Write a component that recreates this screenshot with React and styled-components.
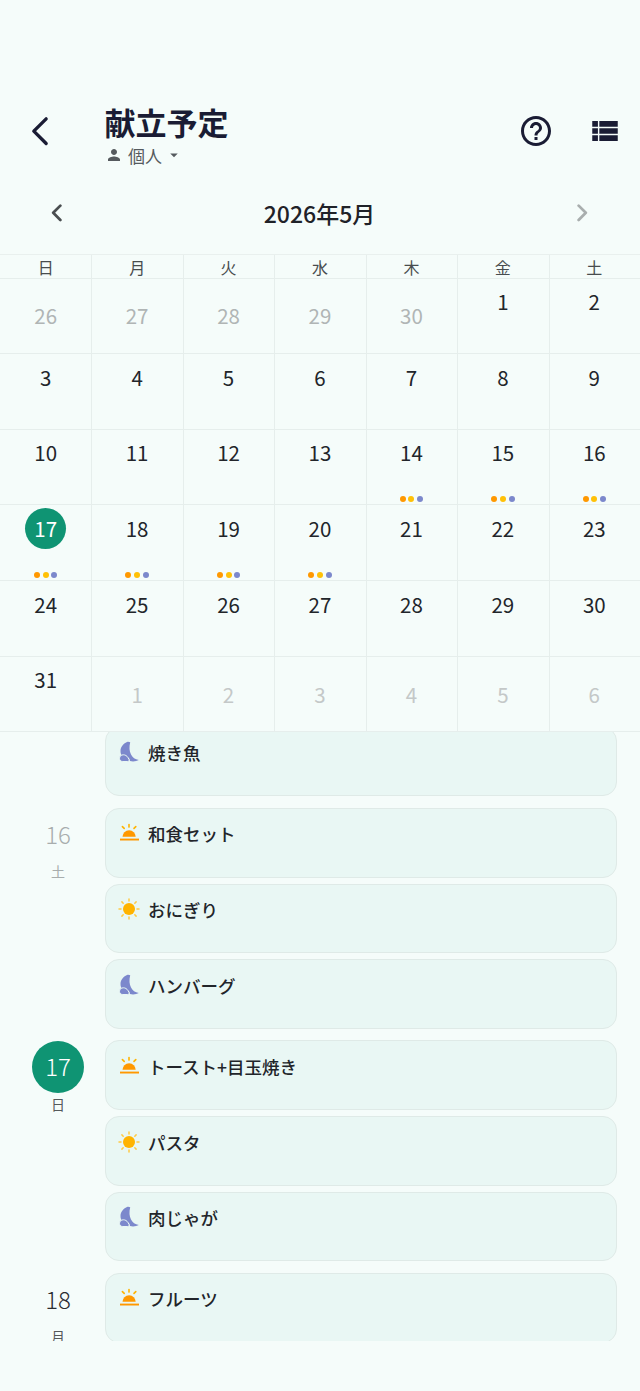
import React from 'react';
import styled, { createGlobalStyle } from 'styled-components';
import { MdHelpOutline, MdViewList, MdPerson, MdArrowDropDown } from 'react-icons/md';

const GlobalStyle = createGlobalStyle`
  html, body { margin: 0; padding: 0; background: #f5fcfa; }
  body { font-family: "Noto Sans CJK JP", "Noto Sans", sans-serif; color: #1a1c2e; }
`;

const Screen = styled.div`
  width: 640px;
  height: 1391px;
  overflow: hidden;
  padding-top: 100px;
  box-sizing: border-box;
  background: #f5fcfa;
`;

const Header = styled.header`
  display: flex;
  align-items: flex-start;
  height: 68px;
`;

const BackButton = styled.div`
  width: 105px;
  padding: 15.6px 0 0 29.6px;
  box-sizing: border-box;
  flex: none;
`;

const TitleBlock = styled.div`
  flex: 1;
`;

const Title = styled.h1`
  margin: 0 0 0 -0.5px;
  font-size: 31px;
  line-height: 43px;
  font-weight: 700;
  color: #1a1c34;
`;

const Owner = styled.div`
  display: flex;
  align-items: center;
  height: 24px;
  color: #555a5e;
  font-size: 17px;
  svg { flex: none; }
`;

const OwnerName = styled.span`
  margin: 0 3px 0 5px;
`;

const HeaderIcons = styled.div`
  display: flex;
  align-items: center;
  gap: 34.5px;
  padding: 13px 18px 0 0;
  color: #1a1c34;
`;

const MonthBar = styled.div`
  display: flex;
  align-items: center;
  justify-content: space-between;
  height: 60px;
  margin: 15px 0 11px;
  padding: 0 52px 0 51px;
`;

const MonthTitle = styled.div`
  font-size: 23px;
  font-weight: 500;
  color: #1f2228;
  margin-top: -1px;
`;

const Calendar = styled.div`
  display: grid;
  grid-template-columns: repeat(7, 1fr);
  grid-template-rows: 23.5px repeat(6, 75.67px);
  border-top: 1px solid #e9f0ee;
  box-sizing: border-box;
`;

const WeekCell = styled.div`
  display: flex;
  align-items: center;
  justify-content: center;
  padding-top: 0.5px;
  font-size: 16px;
  color: #484c4e;
  box-shadow: inset 1px 0 0 #e6eeec;
  border-bottom: 1px solid #e6eeec;
  &:nth-child(7n + 1) { box-shadow: none; }
`;

const DayCell = styled.div`
  position: relative;
  display: flex;
  justify-content: center;
  align-items: ${p => (p.$muted ? 'center' : 'flex-start')};
  padding-top: ${p => (p.$muted ? '0' : '2.5px')};
  box-sizing: border-box;
  box-shadow: inset 1px 0 0 #e6eeec;
  border-bottom: 1px solid #e6eeec;
  &:nth-child(7n + 1) { box-shadow: none; }
`;

const DayNumber = styled.div`
  width: 41px;
  height: 41px;
  line-height: 41px;
  border-radius: 50%;
  text-align: center;
  font-size: 20.5px;
  font-weight: 400;
  color: ${p => (p.$today ? '#fff' : p.$muted ? p.$faint ? '#c4c8c8' : '#b0b5b5' : '#22252a')};
  background: ${p => (p.$today ? '#0f9473' : 'transparent')};
`;

const Dots = styled.div`
  position: absolute;
  left: 0;
  right: 0;
  bottom: 2px;
  display: flex;
  justify-content: center;
  gap: 2.7px;
`;

const Dot = styled.span`
  width: 6px;
  height: 6px;
  border-radius: 50%;
  background: ${p => p.$color};
`;

const Agenda = styled.div`
  height: 608.5px;
  overflow: hidden;
`;

const AgendaScroll = styled.div`
  margin-top: -5.7px;
`;

const DayGroup = styled.div`
  display: flex;
  margin-bottom: 11.5px;
  padding-right: 23px;
`;

const DayAside = styled.div`
  width: 105px;
  flex: none;
  display: flex;
  flex-direction: column;
  align-items: center;
  padding: 1px 0 0 11px;
  box-sizing: border-box;
`;

const AsideNumber = styled.div`
  width: 52px;
  height: 52px;
  line-height: 50px;
  border-radius: 50%;
  text-align: center;
  font-size: 24px;
  font-weight: 300;
  color: ${p => (p.$today ? '#fff' : p.$past ? '#a8adad' : '#2a2d32')};
  background: ${p => (p.$today ? '#0f9473' : 'transparent')};
`;

const AsideWeek = styled.div`
  font-size: 14px;
  line-height: 22px;
  margin-top: -0.5px;
  color: ${p => (p.$past ? '#a8adad' : '#55595b')};
`;

const MealList = styled.div`
  flex: 1;
  display: flex;
  flex-direction: column;
  gap: 6px;
`;

const MealCard = styled.div`
  display: flex;
  align-items: flex-start;
  gap: 8px;
  height: 69.67px;
  box-sizing: border-box;
  padding: 13.5px 12px 0 12px;
  background: #e9f7f4;
  border: 1px solid #dfeae7;
  border-radius: 14px;
`;

const MealName = styled.span`
  font-size: 17.5px;
  line-height: 24px;
  font-weight: 500;
  color: #22252a;
`;

const Chevron = ({ left, size, color, width }) => (
  <svg width={size} height={size * 1.6} viewBox="0 0 10 16" fill="none">
    <path
      d={left ? 'M8.5 1.5 2 8l6.5 6.5' : 'M1.5 1.5 8 8l-6.5 6.5'}
      stroke={color}
      strokeWidth={width}
      strokeLinecap="round"
      strokeLinejoin="round"
    />
  </svg>
);

const SunriseIcon = () => (
  <svg width="22" height="22" viewBox="0 0 22 22">
    <path d="M4.5 14.8a6.6 6.6 0 0 1 13.2 0z" fill="#ff9800" />
    <rect x="2" y="16.6" width="19" height="1.9" fill="#ff9800" />
    <path d="M11 2.5v2.6M4.4 4.6l1.8 1.8M17.8 4.6 16 6.4" stroke="#ffb300" strokeWidth="1.6" strokeLinecap="round" />
  </svg>
);

const SunIcon = () => (
  <svg width="22" height="22" viewBox="0 0 22 22">
    <circle cx="11" cy="11" r="6" fill="#ffb300" />
    <path
      d="M11 1v2M11 19v2M1 11h2M19 11h2M3.9 3.9l1.3 1.3M16.8 16.8l1.3 1.3M3.9 18.1l1.3-1.3M16.8 5.2l1.3-1.3"
      stroke="#ffca45"
      strokeWidth="1.5"
      strokeLinecap="round"
    />
  </svg>
);

const MoonIcon = () => (
  <svg width="22" height="22" viewBox="0 0 22 22">
    <path
      d="M9.5.8C5.5 2.5 2.5 6 2.5 10c0 2 .6 3.6 1.5 5l7 2 1 3c3 .8 6.500.3 8.800-1-3.800-.5-6.300-2.500-7.800-5.500C11.300 10 11 6 12.200 1.200 11.400.8 10.300.6 9.500.8z"
      fill="#7c88cc"
    />
    <path
      d="M1.500 17.300c0-2 1.700-3.500 3.800-3.500 2 0 3.500 1 4.500 2.500l1.200 2c.5.900-.2 2.200-1.400 2.200H4.800c-1.900 0-3.300-1.300-3.300-3.200z"
      fill="#7c88cc"
      stroke="#e9f7f4"
      strokeWidth="1"
    />
  </svg>
);

const mealIcons = { morning: SunriseIcon, noon: SunIcon, night: MoonIcon };

const weekDays = ['日', '月', '火', '水', '木', '金', '土'];

const cells = [
  ...[26, 27, 28, 29, 30].map(n => ({ n, muted: true })),
  ...Array.from({ length: 31 }, (_, i) => ({ n: i + 1 })),
  ...[1, 2, 3, 4, 5, 6].map(n => ({ n, muted: true, faint: true })),
];

const dotted = [14, 15, 16, 17, 18, 19, 20];

const agenda = [
  { key: 15, hidden: true, meals: [['night', '焼き魚']] },
  { key: 16, past: true, week: '土', meals: [['morning', '和食セット'], ['noon', 'おにぎり'], ['night', 'ハンバーグ']] },
  { key: 17, today: true, week: '日', meals: [['morning', 'トースト+目玉焼き'], ['noon', 'パスタ'], ['night', '肉じゃが']] },
  { key: 18, week: '月', meals: [['morning', 'フルーツ']] },
];

export default function App() {
  return (
    <Screen>
      <GlobalStyle />
      <Header>
        <BackButton>
          <Chevron left size={19} color="#1a1c34" width={1.75} />
        </BackButton>
        <TitleBlock>
          <Title>献立予定</Title>
          <Owner>
            <MdPerson size={18} />
            <OwnerName>個人</OwnerName>
            <MdArrowDropDown size={18} />
          </Owner>
        </TitleBlock>
        <HeaderIcons>
          <MdHelpOutline size={36} />
          <MdViewList size={34} />
        </HeaderIcons>
      </Header>
      <MonthBar>
        <Chevron left size={11} color="#4a4e50" width={2.5} />
        <MonthTitle>2026年5月</MonthTitle>
        <Chevron size={11} color="#a9aeae" width={2.5} />
      </MonthBar>
      <Calendar>
        {weekDays.map(d => <WeekCell key={d}>{d}</WeekCell>)}
        {cells.map((c, i) => (
          <DayCell key={i} $muted={c.muted}>
            <DayNumber $muted={c.muted} $faint={c.faint} $today={!c.muted && c.n === 17}>{c.n}</DayNumber>
            {!c.muted && dotted.includes(c.n) && (
              <Dots>
                <Dot $color="#ff9800" />
                <Dot $color="#ffc107" />
                <Dot $color="#7c88cc" />
              </Dots>
            )}
          </DayCell>
        ))}
      </Calendar>
      <Agenda>
        <AgendaScroll>
          {agenda.map(day => (
            <DayGroup key={day.key}>
              <DayAside>
                {!day.hidden && (
                  <>
                    <AsideNumber $today={day.today} $past={day.past}>{day.key}</AsideNumber>
                    <AsideWeek $past={day.past}>{day.week}</AsideWeek>
                  </>
                )}
              </DayAside>
              <MealList>
                {day.meals.map(([type, name]) => {
                  const Icon = mealIcons[type];
                  return (
                    <MealCard key={name}>
                      <Icon />
                      <MealName>{name}</MealName>
                    </MealCard>
                  );
                })}
              </MealList>
            </DayGroup>
          ))}
        </AgendaScroll>
      </Agenda>
    </Screen>
  );
}
